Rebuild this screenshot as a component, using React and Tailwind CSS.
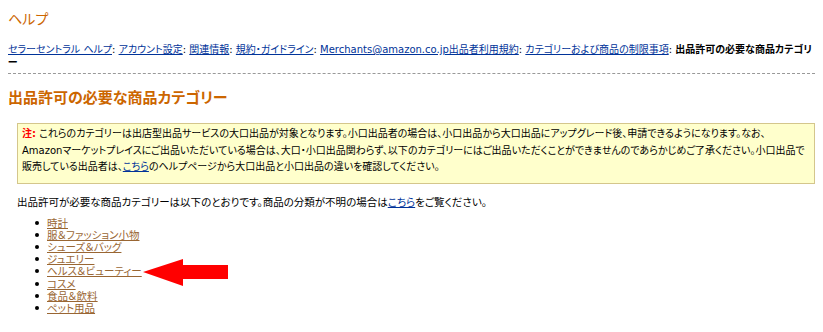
const crumbs = [
  'セラーセントラル ヘルプ',
  'アカウント設定',
  '関連情報',
  '規約・ガイドライン',
  'Merchants@amazon.co.jp出品者利用規約',
  'カテゴリーおよび商品の制限事項',
]

const categories = [
  '時計',
  '服＆ファッション小物',
  'シューズ＆バッグ',
  'ジュエリー',
  'ヘルス＆ビューティー',
  'コスメ',
  '食品＆飲料',
  'ペット用品',
]

function Arrow() {
  return (
    <svg className="absolute left-[143px] top-[41px]" width="86" height="30" viewBox="0 0 86 30">
      <polygon points="0,14 40,1 40,7 85,7 85,21 40,21 40,28" fill="#ff0000" />
    </svg>
  )
}

export default function App() {
  return (
    <div className="w-[823px] h-[332px] overflow-hidden bg-white text-black font-['DejaVu_Sans','Noto_Sans_CJK_JP',sans-serif] [font-feature-settings:'palt'] pl-[8px] pr-[8px] pt-[10px]">
      <h1 className="text-[14px] leading-[18px] text-[#cc6600]">ヘルプ</h1>

      <div className="mt-[15px] text-[10px] leading-[13px]">
        {crumbs.map((c) => (
          <span key={c}>
            <a href="#" className="text-[#003399] underline">{c}</a>
            <span>: </span>
          </span>
        ))}
        <b>出品許可の必要な商品カテゴリ<br />ー</b>
      </div>

      <div className="mt-[4px] border-t border-dashed border-[#999999]" />

      <h2 className="mt-[15px] text-[15px] leading-[18px] font-bold text-[#cc6600]">出品許可の必要な商品カテゴリー</h2>

      <div className="ml-[9px] mt-[16px]">
        <div className="bg-[#ffffcc] border border-[#d4c68c] pl-[4px] pr-[2px] pt-[2px] pb-[7px] text-[10px] leading-[16.5px]">
          <span className="text-[#ff0000] font-bold">注:</span> これらのカテゴリーは出店型出品サービスの大口出品が対象となります。小口出品者の場合は、小口出品から大口出品にアップグレード後、申請できるようになります。なお、<br />
          Amazonマーケットプレイスにご出品いただいている場合は、大口・小口出品関わらず、以下のカテゴリーにはご出品いただくことができませんのであらかじめご了承ください。小口出品で<br />
          販売している出品者は、<a href="#" className="text-[#003399] underline">こちら</a>のヘルプページから大口出品と小口出品の違いを確認してください。
        </div>

        <p className="mt-[11px] text-[10.5px] leading-[14px]">
          出品許可が必要な商品カテゴリーは以下のとおりです。商品の分類が不明の場合は<a href="#" className="text-[#003399] underline">こちら</a>をご覧ください。
        </p>

        <ul className="relative -ml-[17px] mt-[8px] pl-[47px] text-[10.5px] leading-[12.2px]">
          {categories.map((c) => (
            <li key={c} className="relative">
              <span className="absolute left-[-12px] top-[4px] w-[4px] h-[4px] rounded-full bg-black" />
              <a href="#" className="text-[#996633] underline">{c}</a>
            </li>
          ))}
          <Arrow />
        </ul>
      </div>
    </div>
  )
}
